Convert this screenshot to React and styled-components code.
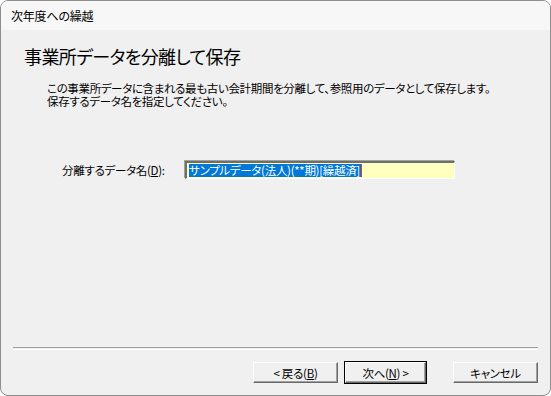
import React from 'react';
import styled, { createGlobalStyle } from 'styled-components';

const GlobalStyle = createGlobalStyle`
  html, body {
    margin: 0;
    padding: 0;
    background: #ffffff;
  }
  body {
    font-family: "Noto Sans CJK JP", "Liberation Sans", sans-serif;
    font-feature-settings: "palt";
    color: #000;
  }
`;

const Window = styled.div`
  width: 551px;
  height: 396px;
  box-sizing: border-box;
  border: 1px solid #8e8e8e;
  border-radius: 8px;
  overflow: hidden;
  display: flex;
  flex-direction: column;
  background: #f0f0f0;
`;

const TitleBar = styled.div`
  height: 29px;
  flex: none;
  display: flex;
  align-items: center;
  padding-left: 10px;
  background: #f7f7f7;
  font-size: 12px;
  letter-spacing: -0.2px;
`;

const Body = styled.div`
  flex: 1;
  display: flex;
  flex-direction: column;
  padding: 13px 12px 12px 12px;
`;

const Heading = styled.h1`
  margin: 0 0 0 11px;
  font-size: 18px;
  font-weight: 400;
  line-height: 26px;
  letter-spacing: -0.6px;
`;

const Description = styled.p`
  margin: 13px 0 0 34px;
  font-size: 11.5px;
  line-height: 13px;
  letter-spacing: -0.35px;
`;

const Field = styled.div`
  display: flex;
  align-items: center;
  margin: 53px 0 0 49px;
`;

const Label = styled.label`
  width: 123px;
  font-size: 11.5px;
  letter-spacing: -0.3px;
`;

const Key = styled.span`
  text-decoration: underline;
  text-underline-offset: 1px;
`;

const TextBox = styled.div`
  width: 270px;
  height: 18px;
  box-sizing: border-box;
  display: flex;
  align-items: center;
  padding-left: 2px;
  background: #ffffc0;
  border-top: 2px solid #6e6e6e;
  border-left: 2px solid #6e6e6e;
  border-right: 1px solid #ffffff;
  border-bottom: 1px solid #ffffff;
  box-shadow: -1px -1px 0 #a0a0a0;
`;

const Selected = styled.span`
  background: #0078d7;
  color: #ffffff;
  font-size: 11.5px;
  line-height: 13px;
  letter-spacing: -0.3px;
  padding-right: 1px;
  border-right: 1px solid #e04020;
`;

const Spacer = styled.div`
  flex: 1;
`;

const Separator = styled.div`
  height: 1px;
  border-top: 1px solid #a0a0a0;
  border-bottom: 1px solid #ffffff;
  margin: 0 0 12px 0;
`;

const Buttons = styled.div`
  display: flex;
  justify-content: flex-end;
  align-items: center;
`;

const Button = styled.button`
  width: ${p => p.$w || 85}px;
  height: 21px;
  margin-left: ${p => p.$gap || 0}px;
  padding: 0;
  box-sizing: border-box;
  background: #f0f0f0;
  font-family: inherit;
  font-feature-settings: "palt";
  font-size: 11.5px;
  letter-spacing: -0.3px;
  color: #000;
  border-top: 1px solid #ffffff;
  border-left: 1px solid #ffffff;
  border-right: 1px solid #696969;
  border-bottom: 1px solid #696969;
  box-shadow: inset -1px -1px 0 #a0a0a0;
  outline: ${p => (p.$default ? '1px solid #000' : 'none')};
  display: flex;
  align-items: center;
  justify-content: center;
  white-space: pre;
`;

export default function App() {
  return (
    <>
      <GlobalStyle />
      <Window>
        <TitleBar>次年度への繰越</TitleBar>
        <Body>
          <Heading>事業所データを分離して保存</Heading>
          <Description>
            この事業所データに含まれる最も古い会計期間を分離して、参照用のデータとして保存します。
            <br />
            保存するデータ名を指定してください。
          </Description>
          <Field>
            <Label>
              分離するデータ名(<Key>D</Key>):
            </Label>
            <TextBox>
              <Selected>サンプルデータ(法人)(**期)[繰越済]</Selected>
            </TextBox>
          </Field>
          <Spacer />
          <Separator />
          <Buttons>
            <Button $w={85}>
              {'< 戻る('}<Key>B</Key>)
            </Button>
            <Button $w={81} $gap={7} $default>
              次へ(<Key>N</Key>{') >'}
            </Button>
            <Button $w={85} $gap={27}>
              キャンセル
            </Button>
          </Buttons>
        </Body>
      </Window>
    </>
  );
}
